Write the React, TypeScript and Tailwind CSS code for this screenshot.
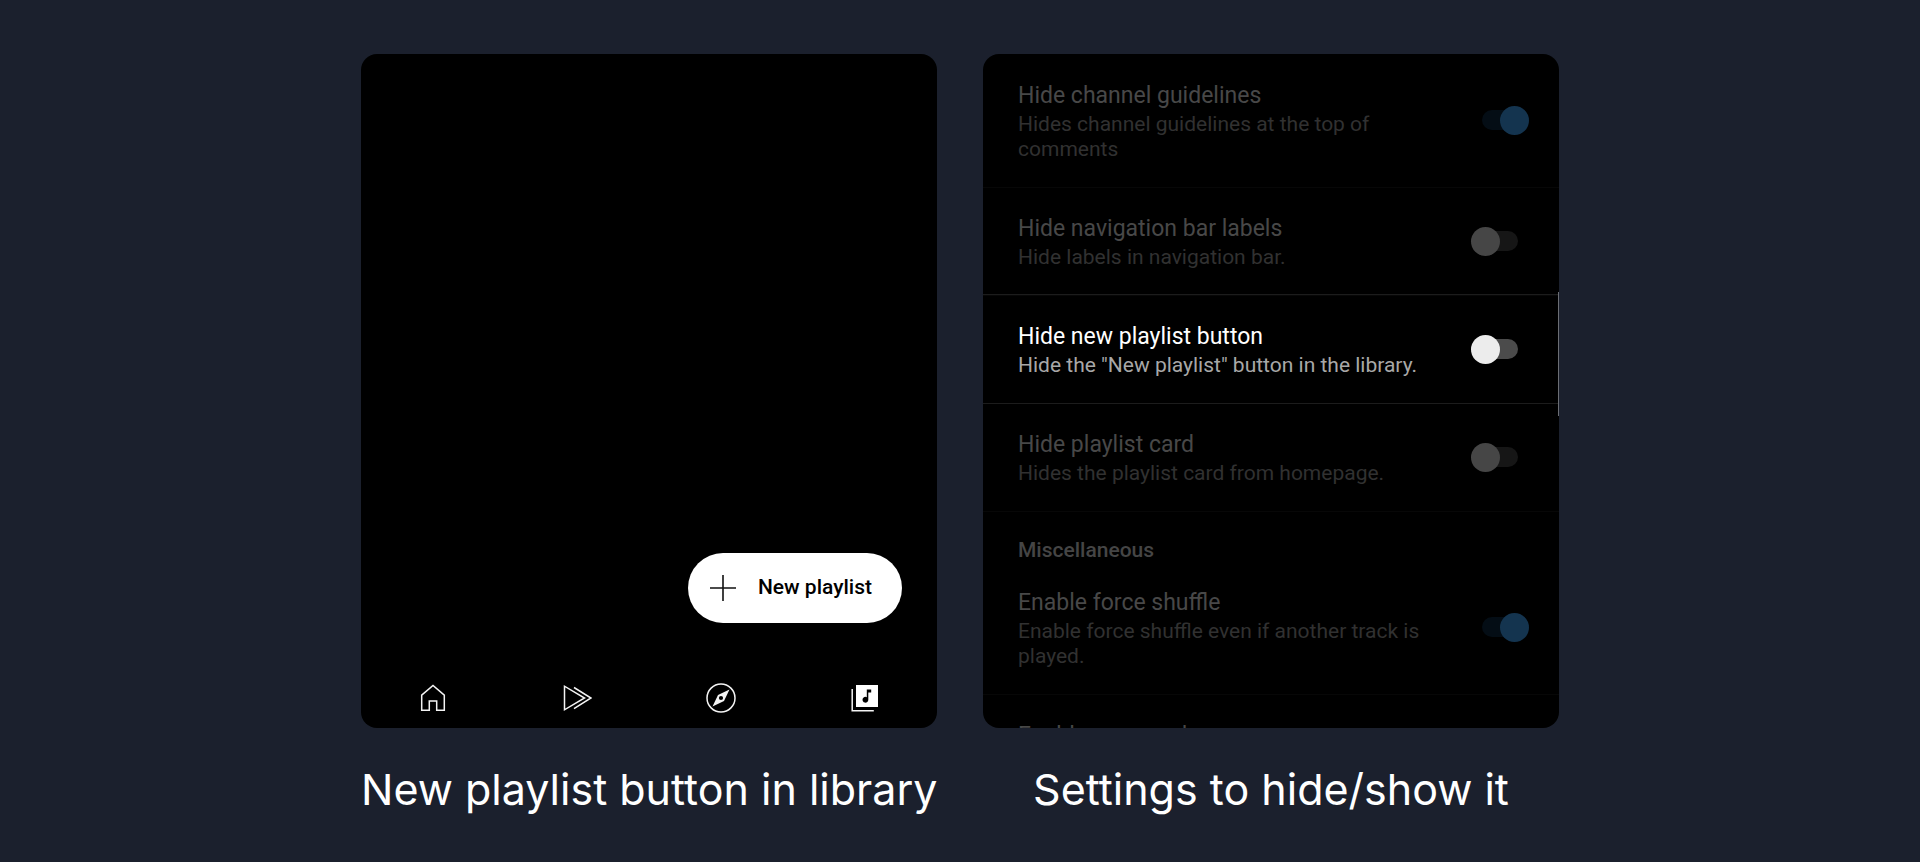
import { useState } from "react";
import type { ReactNode } from "react";

type Setting = {
  id: string;
  title: string;
  description: string;
  on: boolean;
  active?: boolean;
};

const generalSettings: Setting[] = [
  { id: "guidelines", title: "Hide channel guidelines", description: "Hides channel guidelines at the top of comments", on: true },
  { id: "nav-labels", title: "Hide navigation bar labels", description: "Hide labels in navigation bar.", on: false },
  { id: "new-playlist", title: "Hide new playlist button", description: 'Hide the "New playlist" button in the library.', on: false, active: true },
  { id: "playlist-card", title: "Hide playlist card", description: "Hides the playlist card from homepage.", on: false },
];

const miscSettings: Setting[] = [
  { id: "shuffle", title: "Enable force shuffle", description: "Enable force shuffle even if another track is played.", on: true },
  { id: "opus", title: "Enable opus codec", description: "", on: false },
];

function SettingRow({ setting }: { setting: Setting }) {
  const [on, setOn] = useState(setting.on);
  const { id, title, description, active } = setting;
  return (
    <li className={`relative flex items-center justify-between pt-7 pr-[30px] pb-[25px] pl-[35px] ${active ? "shadow-[0_0_0_1px_#1c1c1c]" : "shadow-[0_1px_0_0_#070707]"}`}>
      <label htmlFor={id} className="max-w-[410px]">
        <span className={`block text-[23px] leading-7 ${active ? "text-white" : "text-[#484848]"}`}>{title}</span>
        <span className={`mt-0.5 block min-h-6 text-[21px] leading-[25px] ${active ? "text-[#a8a8a8]" : "text-[#313131]"}`}>{description}</span>
      </label>
      <input
        id={id}
        type="checkbox"
        role="switch"
        checked={on}
        onChange={(e) => setOn(e.target.checked)}
        className={`relative h-8 w-[58px] shrink-0 appearance-none before:absolute before:top-1 before:left-[11px] before:h-5 before:w-9 before:rounded-full after:absolute after:top-0 after:left-0 after:size-[29px] after:rounded-full checked:before:bg-[#040d15] checked:after:left-[29px] checked:after:bg-[#14344f] ${active ? "before:bg-[#4b4b4b] after:bg-[#ececec]" : "before:bg-[#161616] after:bg-[#464646]"}`}
      />
    </li>
  );
}

function NavItem({ label, children }: { label: string; children: ReactNode }) {
  return (
    <a href="#" aria-label={label} className="flex justify-center">
      <svg viewBox="0 0 30 30" className="size-[30px]" fill="none" stroke="#f4f4f4" strokeWidth="1.5">
        {children}
      </svg>
    </a>
  );
}

export default function App() {
  return (
    <main className="min-h-screen bg-[#1b202d] px-6 pt-[54px] font-[Roboto,sans-serif]">
      <div className="mx-auto grid max-w-[1198px] grid-cols-2 gap-[46px]">
        <figure>
          <div className="flex h-[674px] flex-col justify-end rounded-2xl bg-black">
            <button className="mr-[35px] flex h-[70px] items-center gap-[22px] self-end rounded-full bg-white pr-[30px] pl-[22px] text-[21px] font-medium text-black">
              <svg viewBox="0 0 26 26" className="size-[26px]" stroke="#111" strokeWidth="1.6">
                <path d="M13 0v26M0 13h26" />
              </svg>
              New playlist
            </button>
            <nav className="mt-[60px] mb-[15px] grid grid-cols-4">
              <NavItem label="Home">
                <path d="M3.7 27.3V12.2L15 2.5l11.3 9.7v15.1h-7.6v-9.2h-7.4v9.2z" />
              </NavItem>
              <NavItem label="Samples">
                <path d="M2.5 3.2v23.6L22.5 15zM12 4.5 29 15 12 25.6" />
              </NavItem>
              <NavItem label="Explore">
                <circle cx="15" cy="15" r="14" />
                <path fill="#f4f4f4" stroke="none" fillRule="evenodd" d="M23.5 6.5 18 18 6.5 23.5 12 12zM15 12.9a2.1 2.1 0 1 0 0 4.2 2.1 2.1 0 0 0 0-4.2z" />
              </NavItem>
              <NavItem label="Library">
                <path d="M2.2 6v21.7h21.6" />
                <path fill="#fff" stroke="none" d="M6 2h22v22H6z" />
                <path fill="#000" stroke="none" d="M16.8 6.5h4.4v3h-2.9v7.2a2.9 2.9 0 1 1-1.5-2.5z" />
              </NavItem>
            </nav>
          </div>
          <figcaption className="mt-[31px] text-center font-[Inter,sans-serif] text-[43px] leading-[60px] whitespace-nowrap text-white">New playlist button in library</figcaption>
        </figure>

        <figure>
          <div className="relative h-[674px] overflow-hidden rounded-2xl bg-black">
            <ul className="flex flex-col">
              {generalSettings.map((s) => (
                <SettingRow key={s.id} setting={s} />
              ))}
            </ul>
            <h2 className="pt-[29px] pl-[35px] text-[21px] leading-[21px] font-medium text-[#454545]">Miscellaneous</h2>
            <ul className="flex flex-col">
              {miscSettings.map((s) => (
                <SettingRow key={s.id} setting={s} />
              ))}
            </ul>
            <div className="absolute top-[238px] right-0 h-[124px] w-px bg-[#6b6e75]" />
          </div>
          <figcaption className="mt-[31px] text-center font-[Inter,sans-serif] text-[43px] leading-[60px] whitespace-nowrap text-white">Settings to hide/show it</figcaption>
        </figure>
      </div>
    </main>
  );
}
